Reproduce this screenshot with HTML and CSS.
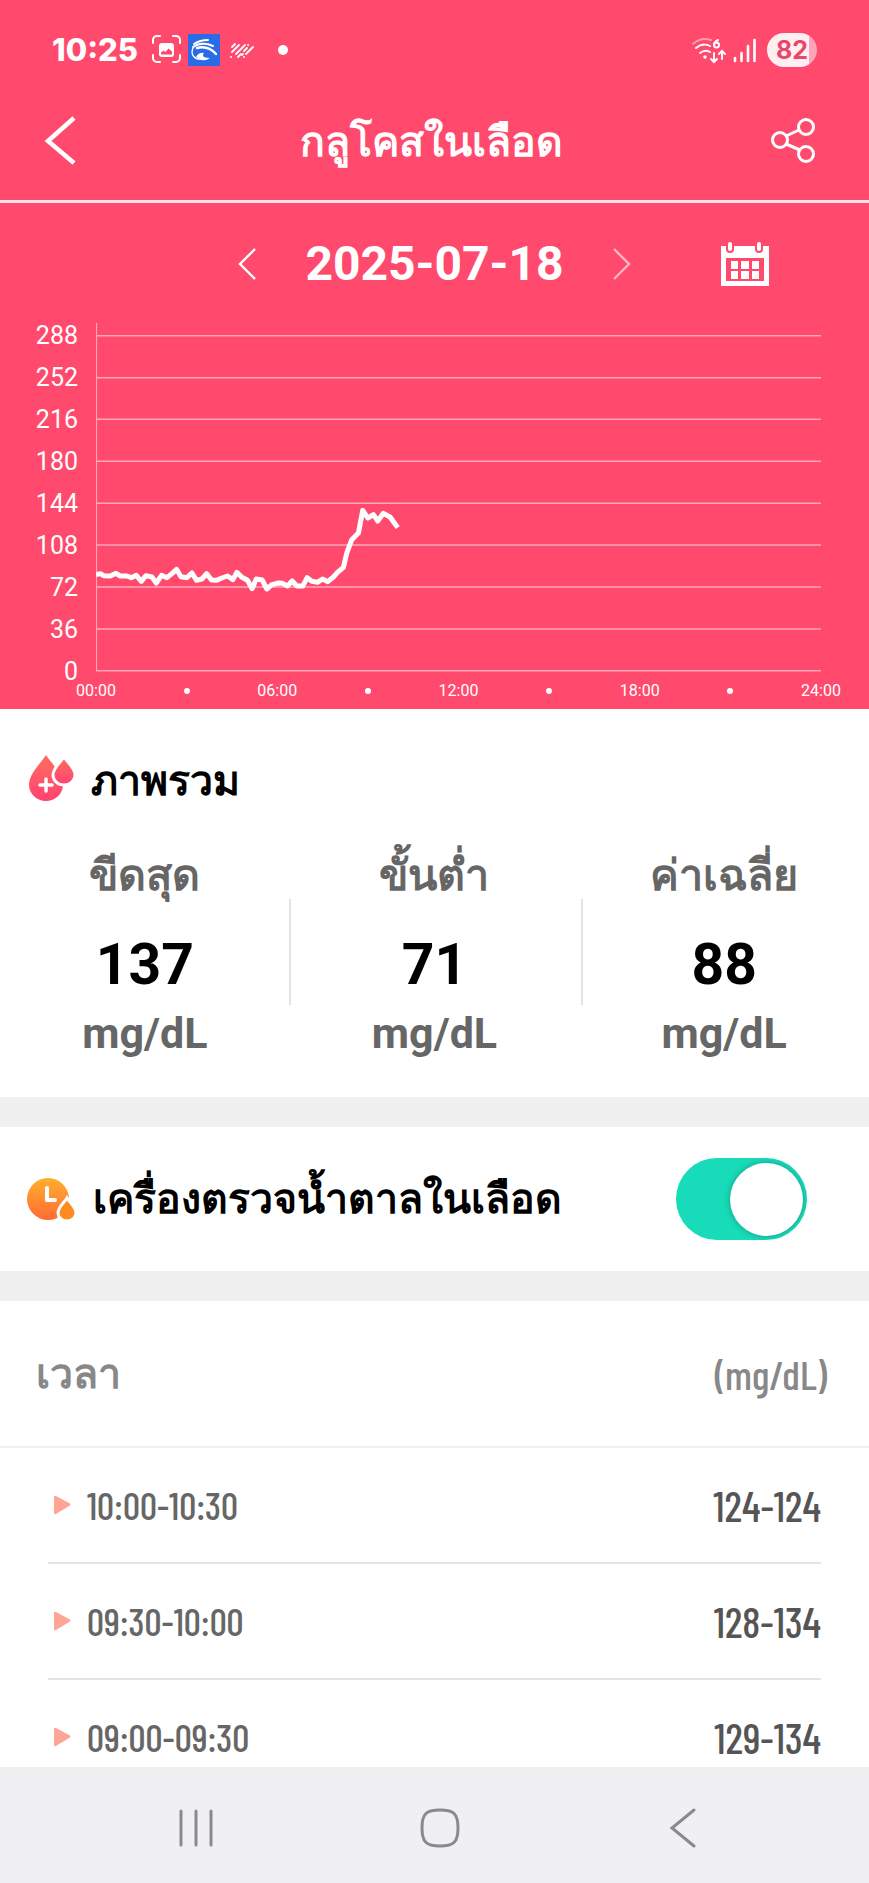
FILE: index.html
```html
<!DOCTYPE html>
<html lang="th">
<head>
<meta charset="utf-8">
<meta name="viewport" content="width=device-width, initial-scale=1">
<title>กลูโคสในเลือด</title>
<link rel="stylesheet" href="styles.css">
</head>
<body>
<div class="screen">
  <div class="status">
    <span class="status-time">10:25</span>
    <svg class="status-left" width="136" height="32" viewBox="0 0 136 32" aria-hidden="true">
      <g fill="none" stroke="#fff" stroke-width="2" stroke-linecap="round">
        <path d="M1 9V6a4 4 0 0 1 4-4h3M21 2h3a4 4 0 0 1 4 4v3M28 21v3a4 4 0 0 1-4 4h-3M8 28H5a4 4 0 0 1-4-4v-3"/>
      </g>
      <rect x="7" y="9" width="15" height="14" rx="3" fill="#fff"/>
      <path d="M9 20.500v-2l2.500-2 2 1.500 3-3.500 3.500 3v3z" fill="#ff496d"/>
      <rect x="36" y="0" width="32" height="32" fill="#2a6be6"/>
      <g fill="none" stroke="#fff" stroke-linecap="round">
        <path d="M42 10q6-4 14-4" stroke-width="2"/>
        <path d="M41 13q9-6 20-1" stroke-width="2"/>
        <path d="M45 14q11-3 19 6" stroke-width="2.400"/>
        <path d="M41 14c-3 7 2 12 9 11" stroke-width="1.400"/>
      </g>
      <path d="M44 23q3-5 8-4-2 2 0 4 3 1 6 1-4 3-8 2-3-1-6-3z" fill="#fff"/>
      <g stroke="#fff" stroke-width="1.800" stroke-linecap="round">
        <path d="M80 13l3-3M80 18l7-7M79 23h.1M84 20l9-9M86 23l3-3M92 17l3-3M92 23h.1M94 20l7-7M96 11h.1M91 20l-1 1"/>
      </g>
      <circle cx="131" cy="16" r="5" fill="#fff"/>
    </svg>
    <svg class="status-right" width="66" height="28" viewBox="0 0 66 28" aria-hidden="true">
      <g fill="none" stroke="#fff" stroke-width="2" stroke-linecap="round">
        <path d="M2 8Q10 1 20 4" opacity=".45"/>
        <path d="M5 12q7-6 14-2M9 17q5-4 10-1"/>
        <path d="M27 4q-3 1-4 4.500"/>
        <circle cx="25.500" cy="9" r="2.500"/>
        <path d="M23 17v9M20 23l3 3 3-3M31 23v-8M28 18l3-3 3 3"/>
        <path d="M44 22v3M50.500 17v8M57 10v15M63.500 4v21" stroke-width="2.600"/>
      </g>
      <circle cx="14" cy="21" r="1.800" fill="#fff"/>
    </svg>
    <span class="battery">82</span>
  </div>

  <header class="titlebar">
    <button class="icon-btn" type="button" aria-label="ย้อนกลับ">
      <svg width="36" height="52" viewBox="0 0 36 52"><path d="M32 4L6 27l26 22" fill="none" stroke="#fff" stroke-width="4.500"/></svg>
    </button>
    <h1 class="title">กลูโคสในเลือด</h1>
    <button class="icon-btn share" type="button" aria-label="แชร์">
      <svg width="46" height="46" viewBox="0 0 46 46"><g fill="none" stroke="#fff" stroke-width="3"><circle cx="9" cy="23" r="7.500"/><circle cx="35" cy="10" r="7.500"/><circle cx="35" cy="37" r="7.500"/><path d="M15 19l13-6M15 27l14 6"/></g></svg>
    </button>
  </header>

  <main class="content">
    <section class="chart-panel">
      <div class="date-row">
        <div class="date-nav">
          <button class="icon-btn" type="button" aria-label="วันก่อนหน้า">
            <svg width="20" height="34" viewBox="0 0 20 34"><path d="M18 2L3 17l15 15" fill="none" stroke="#fff" stroke-width="2.400"/></svg>
          </button>
          <time class="date" datetime="2025-07-18">2025-07-18</time>
          <button class="icon-btn is-dim" type="button" aria-label="วันถัดไป">
            <svg width="20" height="34" viewBox="0 0 20 34"><path d="M2 2l15 15L2 32" fill="none" stroke="#fff" stroke-width="2.400"/></svg>
          </button>
        </div>
        <button class="icon-btn calendar" type="button" aria-label="ปฏิทิน">
          <svg width="50" height="46" viewBox="0 0 50 46">
            <path d="M1 5h5v3a4 4 0 0 0 8 0V5h21v3a4 4 0 0 0 8 0V5h6v40H1z" fill="#fff"/>
            <rect x="8" y="1" width="4" height="9" rx="2" fill="#fff"/><rect x="37" y="1" width="4" height="9" rx="2" fill="#fff"/>
            <rect x="6" y="17" width="38" height="23" fill="#ff496d"/>
            <path d="M11 20h7v8h-7zM21 20h8v8h-8zM32 20h7v8h-7zM11 30h7v8h-7zM21 30h8v8h-8zM32 30h7v8h-7z" fill="#fff"/>
          </svg>
        </button>
      </div>
      <div class="chart">
        <div class="y-axis"><span>288</span><span>252</span><span>216</span><span>180</span><span>144</span><span>108</span><span>72</span><span>36</span><span>0</span></div>
        <svg class="plot" viewBox="0 0 2177 1047" preserveAspectRatio="none" role="img" aria-label="กราฟกลูโคสในเลือด">
          <path class="grid" d="M1 0V1043M0 38H2177M0 164H2177M0 289H2177M0 415H2177M0 541H2177M0 666H2177M0 792H2177M0 918H2177M0 1043H2177"/>
          <polyline class="line" points="0,755 13,752 23,758 43,759 60,751 73,759 93,759 106,764 121,757 136,775 150,758 168,762 181,780 197,757 213,764 228,752 242,739 255,761 273,764 288,750 302,772 318,768 332,752 347,771 361,772 378,765 395,759 411,770 423,748 438,763 455,772 469,797 481,768 499,771 513,798 528,785 548,780 560,781 575,789 589,774 603,789 621,789 634,764 648,775 665,778 680,768 696,776 713,762 725,748 743,733 753,690 768,650 788,630 801,562 816,585 833,575 846,594 863,571 883,582 906,614"/>
        </svg>
        <div class="x-axis"><span>00:00</span><i></i><span>06:00</span><i></i><span>12:00</span><i></i><span>18:00</span><i></i><span>24:00</span></div>
      </div>
    </section>

    <section class="overview">
      <h2 class="heading">
        <svg width="48" height="50" viewBox="0 0 48 50" aria-hidden="true">
          <defs><linearGradient id="red" x1="0" y1="0" x2="0" y2="1"><stop offset="0" stop-color="#ff6e5c"/><stop offset="1" stop-color="#ff4272"/></linearGradient></defs>
          <path d="M19 1C13 10 2 20 2 31a17 16 0 0 0 34 0C36 20 25 10 19 1z" fill="url(#red)"/>
          <path d="M37 3c-4 6-11 11-11 18a11 10 0 0 0 22 0c0-7-7-12-11-18z" fill="url(#red)" stroke="#fff" stroke-width="3"/>
          <path d="M19 25v12M13 31h12" stroke="#fff" stroke-width="3.500" stroke-linecap="round"/>
        </svg>
        <span>ภาพรวม</span>
      </h2>
      <dl class="stats">
        <div class="stat"><dt>ขีดสุด</dt><dd class="num">137</dd><dd class="unit">mg/dL</dd></div>
        <div class="stat"><dt>ขั้นต่ำ</dt><dd class="num">71</dd><dd class="unit">mg/dL</dd></div>
        <div class="stat"><dt>ค่าเฉลี่ย</dt><dd class="num">88</dd><dd class="unit">mg/dL</dd></div>
      </dl>
    </section>

    <section class="monitor">
      <label class="heading" for="monitor">
        <svg width="50" height="44" viewBox="0 0 50 44" aria-hidden="true">
          <defs><linearGradient id="org" x1="0" y1="0" x2="0" y2="1"><stop offset="0" stop-color="#ffb02e"/><stop offset="1" stop-color="#ff6a35"/></linearGradient></defs>
          <circle cx="21" cy="22" r="21" fill="url(#org)"/>
          <path d="M20 11v12h8" fill="none" stroke="#fff" stroke-width="4" stroke-linecap="round" stroke-linejoin="round"/>
          <path d="M40 21c-3 5-9 9-9 15a9 8 0 0 0 18 0c0-6-6-10-9-15z" fill="#ff8a1f" stroke="#fff" stroke-width="3"/>
        </svg>
        <span>เครื่องตรวจน้ำตาลในเลือด</span>
      </label>
      <input class="switch" id="monitor" type="checkbox" role="switch" checked>
    </section>

    <table class="log">
      <thead><tr><th scope="col">เวลา</th><th scope="col" class="log-unit">(mg/dL)</th></tr></thead>
      <tbody>
        <tr><td><div class="cell"><svg width="18" height="20" viewBox="0 0 18 20" aria-hidden="true"><path d="M1 2q0-2 2-1l14 7.500q1 1 0 2L3 19q-2 1-2-1z" fill="#ffa595"/></svg>10:00-10:30</div></td><td><div class="cell value">124-124</div></td></tr>
        <tr><td><div class="cell"><svg width="18" height="20" viewBox="0 0 18 20" aria-hidden="true"><path d="M1 2q0-2 2-1l14 7.500q1 1 0 2L3 19q-2 1-2-1z" fill="#ffa595"/></svg>09:30-10:00</div></td><td><div class="cell value">128-134</div></td></tr>
        <tr><td><div class="cell"><svg width="18" height="20" viewBox="0 0 18 20" aria-hidden="true"><path d="M1 2q0-2 2-1l14 7.500q1 1 0 2L3 19q-2 1-2-1z" fill="#ffa595"/></svg>09:00-09:30</div></td><td><div class="cell value">129-134</div></td></tr>
      </tbody>
    </table>
  </main>

  <nav class="navbar" aria-label="ระบบ">
    <button class="icon-btn" type="button" aria-label="แอปล่าสุด"><svg width="40" height="40" viewBox="0 0 40 40"><path d="M5 3v34M20 3v34M35 3v34"/></svg></button>
    <button class="icon-btn" type="button" aria-label="หน้าหลัก"><svg width="40" height="40" viewBox="0 0 40 40"><path d="M20 2c14 0 18 4 18 18s-4 18-18 18S2 34 2 20 6 2 20 2z"/></svg></button>
    <button class="icon-btn" type="button" aria-label="กลับ"><svg width="40" height="40" viewBox="0 0 40 40"><path d="M31 2L9 20l22 18"/></svg></button>
  </nav>
</div>
</body>
</html>
```
FILE: styles.css
```css
* { box-sizing: border-box; }
body {
  margin: 0;
  background: #fff;
  color: #000;
  font-family: Roboto, sans-serif;
}
.screen { display: flex; flex-direction: column; height: 100vh; }
.icon-btn {
  display: flex;
  padding: 0;
  border: 0;
  background: none;
}
.is-dim { opacity: .6; }

.status {
  display: flex;
  align-items: center;
  height: 100px;
  padding: 0 52px;
  background: #ff496d;
  color: #fff;
}
.status-time {
  font: 800 31px/36px Inter, sans-serif;
}
.status-left { margin-left: 14px; }
.status-right { margin-left: auto; }
.battery {
  width: 50px;
  margin-left: 10px;
  border-radius: 17px;
  background: linear-gradient(90deg, #ffeef2 42px, #ffa4b8 42px);
  color: #e8476a;
  font: 700 25px/34px Inter, sans-serif;
  text-align: center;
}

.titlebar {
  display: grid;
  grid-template-columns: 1fr auto 1fr;
  align-items: center;
  height: 103px;
  padding: 0 48px 20px 42px;
  border-bottom: 3px solid #ffe1e8;
  background: #ff496d;
  color: #fff;
}
.share { justify-self: end; margin-right: 4px; }
.title { margin: 0; padding-top: 4px; font-size: 41px; line-height: 60px; font-weight: 700; }

.content { flex: 1; min-height: 0; overflow: hidden; }
.chart-panel { background: #ff496d; color: #fff; }
.date-row {
  display: grid;
  grid-template-columns: 1fr auto 1fr;
  align-items: center;
  height: 120px;
  padding-top: 2px;
}
.date-nav { display: flex; grid-column: 2; align-items: center; gap: 48px; }
.date { font-size: 48px; line-height: 56px; font-weight: 700; }
.calendar { justify-self: end; margin-right: 99px; }

.chart {
  display: grid;
  grid-template-columns: 78px 1fr;
  column-gap: 18px;
  padding-right: 48px;
}
.y-axis {
  display: flex;
  flex-direction: column;
  height: 357px;
  margin-top: -8px;
  font-size: 25px;
  line-height: 42px;
  text-align: right;
}
.plot { width: 100%; height: 349px; }
.grid {
  fill: none;
  stroke: #ffa8ba;
  stroke-width: 1.500px;
  vector-effect: non-scaling-stroke;
}
.line {
  fill: none;
  stroke: #fff;
  stroke-width: 5px;
  stroke-linejoin: round;
  vector-effect: non-scaling-stroke;
}
.x-axis {
  display: flex;
  grid-column: 2;
  align-items: center;
  justify-content: space-between;
  height: 37px;
  margin: 0 -30px;
  font-size: 16px;
  line-height: 20px;
  text-align: center;
}
.x-axis span { width: 60px; }
.x-axis i {
  width: 6px;
  height: 6px;
  margin: 0 27px;
  border-radius: 50%;
  background: #fff;
}

.overview { height: 388px; padding-top: 40px; }
.heading {
  display: flex;
  align-items: center;
  gap: 16px;
  margin: 0;
  padding-left: 27px;
  font-size: 41px;
  line-height: 60px;
  font-weight: 700;
}
.overview .heading span { padding-top: 4px; line-height: 56px; }
.stats {
  display: grid;
  grid-template-columns: repeat(3, 1fr);
  margin: 30px 0 0;
  text-align: center;
  font-weight: 700;
  background:
    linear-gradient(#e4e4e4, #e4e4e4) 33.300% 60px / 2px 106px no-repeat,
    linear-gradient(#e4e4e4, #e4e4e4) 67% 60px / 2px 106px no-repeat;
}
.stat dt { color: #666; font-size: 43px; line-height: 72px; }
.stat dd { margin: 0; }
.num { font-size: 57px; line-height: 108px; }
.unit { color: #666; font-size: 43px; line-height: 28px; }

.monitor {
  display: flex;
  align-items: center;
  justify-content: space-between;
  height: 204px;
  padding-right: 62px;
  border: solid #f0f0f0;
  border-width: 30px 0;
}
.switch {
  display: flex;
  align-items: center;
  justify-content: flex-end;
  width: 131px;
  height: 82px;
  margin: 0;
  padding: 4px;
  border-radius: 41px;
  background: #18dbb9;
  appearance: none;
}
.switch::before {
  width: 73px;
  height: 73px;
  border-radius: 50%;
  background: #fff;
  box-shadow: 0 0 6px rgb(0 0 0 / 30%);
  content: "";
}
.switch:not(:checked) { justify-content: flex-start; background: #ccc; }

.log {
  width: 100%;
  border-collapse: collapse;
  color: #666;
  font-family: "Barlow Condensed", "Roboto Condensed", "Liberation Sans Narrow", Roboto, sans-serif;
  font-weight: 500;
}
.log th {
  height: 146px;
  padding: 0 36px;
  border-bottom: 2px solid #f0f0f0;
  color: #888;
  font-size: 41px;
  text-align: left;
}
.log .log-unit { padding-right: 42px; font-weight: 500; text-align: right; }
.log td { padding: 0 0 0 48px; }
.log td + td { padding: 0 48px 0 0; }
.cell {
  display: flex;
  align-items: center;
  gap: 16px;
  height: 116px;
  padding-left: 5px;
  border-bottom: 2px solid #e4e4e4;
  font-size: 38px;
}
.value { justify-content: flex-end; color: #555; font-size: 42px; }

.navbar {
  display: flex;
  align-items: center;
  justify-content: space-between;
  height: 116px;
  padding: 6px 166px 0 176px;
  background: #f0f0f2;
}
.navbar path {
  fill: none;
  stroke: #8a8a8c;
  stroke-width: 3px;
  stroke-linecap: round;
}
```
